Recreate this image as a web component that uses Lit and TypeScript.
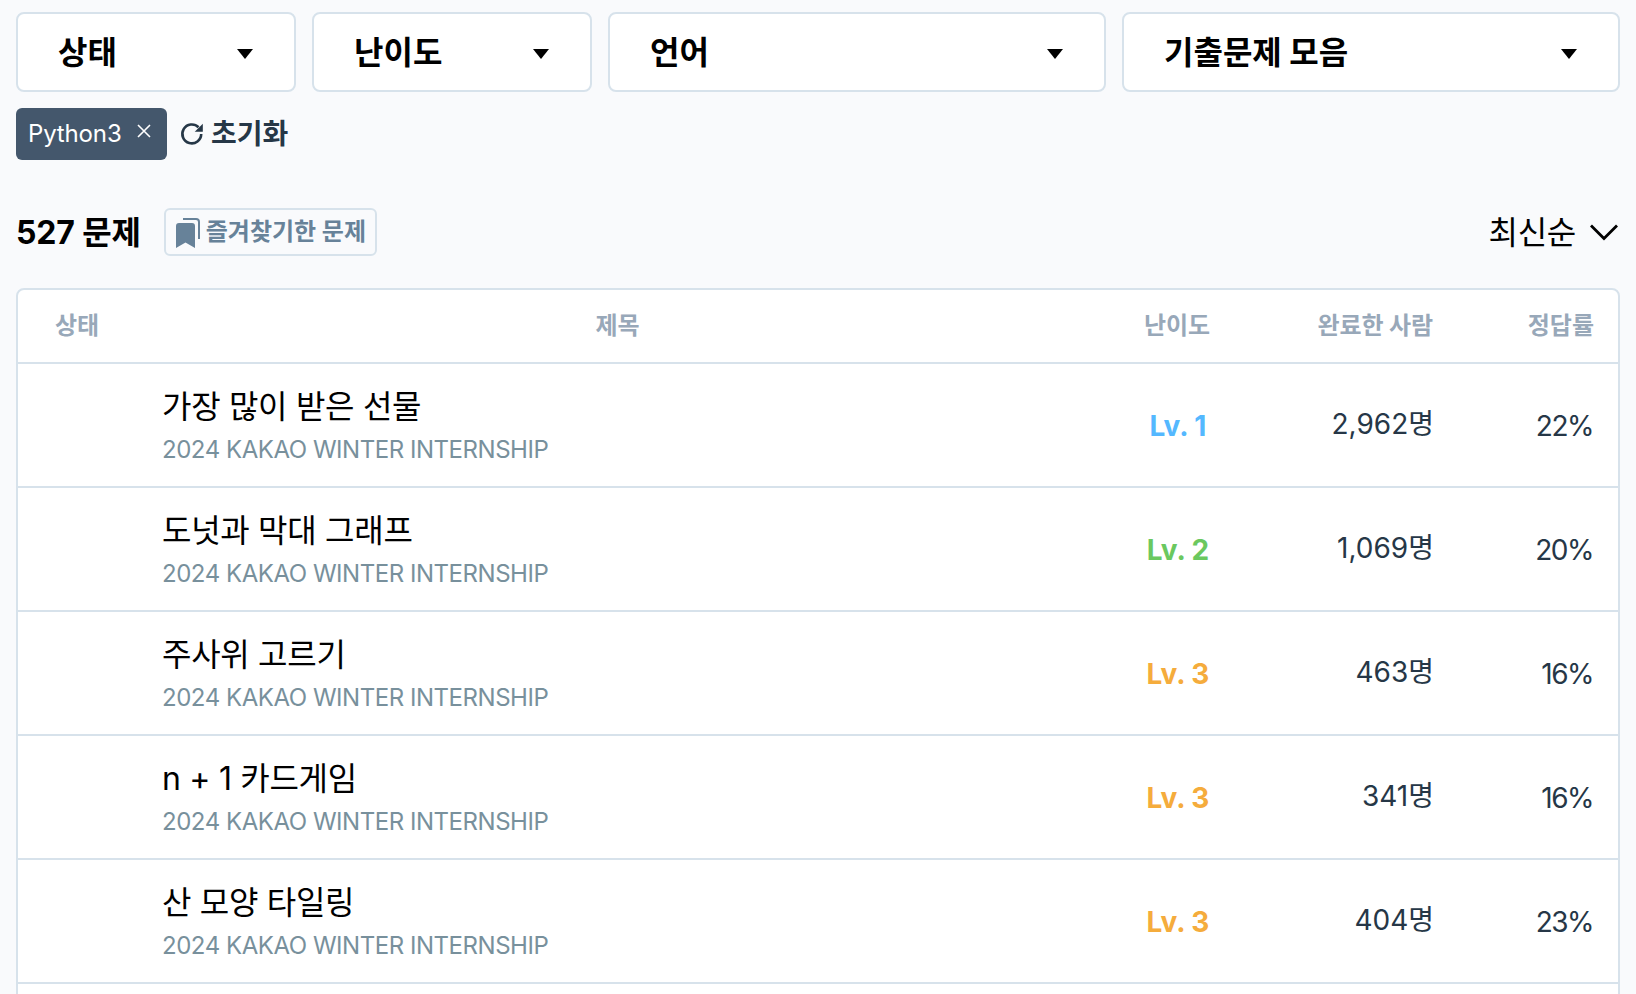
import { LitElement, html, css } from "lit";
import { customElement } from "lit/decorators.js";

const ROWS = [
  { title: "가장 많이 받은 선물", lv: 1, done: "2,962명", rate: "22%" },
  { title: "도넛과 막대 그래프", lv: 2, done: "1,069명", rate: "20%" },
  { title: "주사위 고르기", lv: 3, done: "463명", rate: "16%" },
  { title: "n + 1 카드게임", lv: 3, done: "341명", rate: "16%" },
  { title: "산 모양 타일링", lv: 3, done: "404명", rate: "23%" },
];

const caret = html`<svg class="caret" viewBox="0 0 16 12" width="16" height="12"><path d="M0 1h16L8 11z" fill="#000"/></svg>`;

@customElement("app-root")
export class AppRoot extends LitElement {
  static styles = css`
    :host {
      display: block;
      height: 994px;
      overflow: hidden;
      background: #f9fafc;
      font-family: Inter, "Noto Sans CJK KR", sans-serif;
      color: #263747;
    }
    .page { padding: 12px 16px 0; }
    .filters { display: flex; gap: 16px; }
    .select {
      box-sizing: border-box;
      height: 80px;
      background: #fff;
      border: 2px solid #d7e2eb;
      border-radius: 8px;
      padding: 0 41px 0 40px;
      display: flex;
      align-items: center;
      justify-content: space-between;
      font-size: 32px;
      font-weight: 700;
      color: #000;
    }
    .select span { margin-top: -4px; }
    .select .caret { margin-top: 3px; }
    .fixed { flex: 0 0 280px; }
    .grow { flex: 1 1 0; }
    .applied { display: flex; align-items: center; margin-top: 16px; height: 52px; }
    .tag {
      box-sizing: border-box;
      width: 151px;
      height: 52px;
      background: #44576c;
      border-radius: 6px;
      color: #fff;
      font-size: 24px;
      letter-spacing: -0.15px;
      padding-left: 12px;
      padding-bottom: 2px;
      display: flex;
      align-items: center;
    }
    .tag svg { margin-left: 15px; margin-top: -4px; }
    .reset { display: flex; align-items: center; margin-left: 12px; font-size: 28px; font-weight: 700; color: #263747; }
    .reset span { margin-top: -4px; }
    .reset svg { margin-right: 6px; }
    .summary { display: flex; align-items: center; margin-top: 48px; height: 48px; }
    .count { font-size: 32px; font-weight: 700; color: #000; margin-top: -4px; letter-spacing: -0.15px; }
    .fav {
      box-sizing: border-box;
      height: 48px;
      margin-left: 23px;
      padding: 0 9px 0 10px;
      border: 2px solid #d7e2eb;
      border-radius: 6px;
      display: flex;
      align-items: center;
      gap: 6px;
      font-size: 24px;
      font-weight: 700;
      color: #678299;
    }
    .fav span { margin-top: -6px; }
    .sort { margin-left: auto; margin-right: 1px; display: flex; align-items: center; gap: 13px; font-size: 32px; letter-spacing: -0.3px; color: #000; }
    .sort span { margin-top: -4px; }
    .card {
      margin-top: 32px;
      background: #fff;
      border: 2px solid #d7e2eb;
      border-radius: 8px 8px 0 0;
    }
    .row {
      display: grid;
      grid-template-columns: 144px 911px 208px 1fr 160px;
      padding-right: 24px;
      align-items: center;
      border-bottom: 2px solid #d7e2eb;
    }
    .head { height: 72px; font-size: 24px; font-weight: 700; color: #98a8b9; }
    .head > div { margin-top: -6px; }
    .head .st { padding-left: 37px; }
    .head .done-h { padding-right: 1px; letter-spacing: -0.1px; }
    .body { height: 122px; }
    .c { text-align: center; }
    .r { text-align: right; }
    .tc { padding-top: 2px; }
    .title { font-size: 32px; color: #000; line-height: 42px; letter-spacing: -0.3px; }
    .sub { font-size: 24px; color: #78909c; line-height: 34px; margin-top: 5px; letter-spacing: -0.46px; }
    .lv { font-size: 28px; font-weight: 700; padding-left: 2px; margin-top: 2px; }
    .lv1 { color: #54b8ff; }
    .lv2 { color: #6bc85f; }
    .lv3 { color: #f5ac3c; }
    .done, .rate { color: #263747; font-size: 28px; }
    .done { margin-top: -6px; }
    .rate { margin-top: 2px; letter-spacing: -1.5px; padding-right: 1px; }
    .last { height: 122px; border-bottom: 0; }
  `;

  render() {
    return html`<div class="page">
      <div class="filters">
        <div class="select fixed"><span>상태</span>${caret}</div>
        <div class="select fixed"><span>난이도</span>${caret}</div>
        <div class="select grow"><span>언어</span>${caret}</div>
        <div class="select grow"><span>기출문제 모음</span>${caret}</div>
      </div>
      <div class="applied">
        <div class="tag">Python3
          <svg viewBox="0 0 14 14" width="14" height="14"><path d="M1 1l12 12M13 1L1 13" stroke="#fff" stroke-width="1.6" fill="none"/></svg>
        </div>
        <div class="reset">
          <svg viewBox="0 0 24 24" width="26" height="26"><path d="M20.500 12a8.700 8.700 0 1 1-2.500-6.200" fill="none" stroke="#263747" stroke-width="2.400"/><path d="M22 2.500v7.500h-7.500z" fill="#263747"/></svg>
          <span>초기화</span>
        </div>
      </div>
      <div class="summary">
        <div class="count">527 문제</div>
        <div class="fav">
          <svg viewBox="0 0 24 32" width="24" height="32"><path d="M0 10a3 3 0 0 1 3-3h13a3 3 0 0 1 3 3v22l-9.500-5.500L0 32z" fill="#678299"/><path d="M7 3h13a3 3 0 0 1 3 3v17" fill="none" stroke="#678299" stroke-width="2"/></svg>
          <span>즐겨찾기한 문제</span>
        </div>
        <div class="sort"><span>최신순</span>
          <svg viewBox="0 0 30 18" width="30" height="18"><path d="M2 2.500l13 13 13-13" fill="none" stroke="#000" stroke-width="2.800"/></svg>
        </div>
      </div>
      <div class="card">
        <div class="row head">
          <div class="st">상태</div><div class="c">제목</div><div class="c">난이도</div><div class="r done-h">완료한 사람</div><div class="r">정답률</div>
        </div>
        ${ROWS.map((r) => html`<div class="row body">
          <div></div>
          <div class="tc"><div class="title">${r.title}</div><div class="sub">2024 KAKAO WINTER INTERNSHIP</div></div>
          <div class="c lv lv${r.lv}">Lv. ${r.lv}</div>
          <div class="r done">${r.done}</div>
          <div class="r rate">${r.rate}</div>
        </div>`)}
        <div class="row last"></div>
      </div>
    </div>`;
  }
}
